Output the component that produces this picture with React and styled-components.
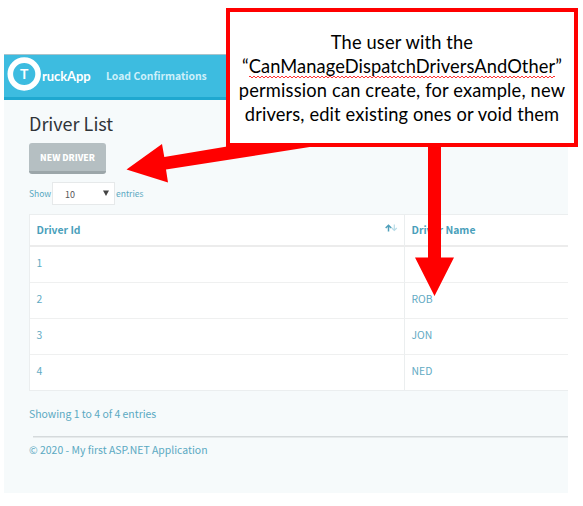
import React from "react";
import styled, { createGlobalStyle } from "styled-components";

const GlobalStyle = createGlobalStyle`
  * { box-sizing: border-box; }
  body { margin: 0; background: #fff; }
`;

const Page = styled.div`
  position: relative;
  width: 583px;
  height: 506px;
  padding: 54px 15px 13px 4px;
  background: #fff;
  overflow: hidden;
  font-family: "Noto Sans CJK SC", "Noto Sans", sans-serif;
  color: #5aa9c2;
`;

const Panel = styled.div`
  height: 439px;
  background: #f6fafb;
`;

const Navbar = styled.nav`
  display: flex;
  align-items: center;
  height: 46px;
  padding: 0 0 1px 3px;
  background: #3dbce0;
  border-top: 1px solid #a9c3cb;
  border-bottom: 3px solid #1fa8d0;
`;

const Logo = styled.svg`
  flex: none;
  width: 35px;
  height: 34px;
  margin-top: -4px;
`;

const LogoLetter = styled.text`
  font: 700 14px Lato, sans-serif;
  fill: #fff;
`;

const Brand = styled.span`
  width: 64px;
  font: 700 13px/20px Lato, sans-serif;
  letter-spacing: -0.1px;
  color: #fff;
`;

const NavLink = styled.span`
  font-size: 10.4px;
  font-weight: 700;
  line-height: 20px;
  color: #cdf0fa;
  white-space: nowrap;
`;

const Content = styled.main`
  padding: 9px 0 0 25px;
`;

const Title = styled.h1`
  margin: 0;
  height: 34px;
  font-size: 18px;
  font-weight: 400;
  line-height: 28px;
  color: #2f3438;
`;

const Button = styled.button`
  display: block;
  width: 77px;
  height: 31px;
  padding: 2px 0 0;
  border: 0;
  border-bottom: 3px solid #9ca6a9;
  border-radius: 3px;
  background: #b5bfc2;
  color: #fff;
  font: 900 8.7px/20px "Noto Sans CJK SC", sans-serif;
`;

const LengthRow = styled.div`
  display: flex;
  align-items: center;
  height: 23px;
  margin-top: 8px;
  font-size: 8.5px;
  line-height: 20px;
`;

const LengthLabel = styled.span`
  min-width: 23px;
  padding-bottom: 2px;
`;

const Select = styled.div`
  display: flex;
  align-items: center;
  justify-content: space-between;
  width: 63px;
  height: 23px;
  margin-right: 1px;
  padding: 2px 5px 0 12px;
  border: 1px solid #e6e9ea;
  background: #fff;
  color: #555;
  font-size: 9px;
`;

const Caret = styled.svg`
  width: 6px;
  height: 6px;
  margin-top: -3px;
`;

const Table = styled.div`
  display: grid;
  grid-template-columns: 374px 1fr;
  margin-top: 9px;
  border: 1px solid #ebeeef;
  border-right: 0;
  background: #fff;
`;

const Cell = styled.div`
  display: flex;
  align-items: center;
  justify-content: space-between;
  height: ${(p) => (p.$head ? 32 : p.$last ? 35 : 36)}px;
  padding: 0 7px ${(p) => (p.$head ? 0 : p.$last ? 4 : 3)}px 6.5px;
  border-left: ${(p) => (p.$divided ? "1px solid #ebeeef" : "0")};
  border-bottom: ${(p) => (p.$head ? "2px solid #ececec" : p.$last ? "0" : "1px solid #eff0f0")};
  font-size: 10.4px;
  font-weight: ${(p) => (p.$head ? 700 : 400)};
  line-height: 20px;
  color: ${(p) => (p.$head ? "#4a9fbb" : "#62aac3")};
`;

const SortIcon = styled.svg`
  width: 13px;
  height: 8px;
  margin: -5px -1px 0 0;
`;

const Info = styled.p`
  margin: 13px 0 0;
  font-size: 10.45px;
  line-height: 20px;
`;

const Footer = styled.footer`
  margin-top: 12px;
  font-size: 10.45px;
  line-height: 20px;
`;

const Rule = styled.hr`
  height: 2px;
  margin: 0 0 2px 4px;
  border: 0;
  border-top: 1px solid #d5dadc;
  background: #e6eaeb;
`;

const Arrows = styled.svg`
  position: absolute;
  left: 0;
  top: 0;
  width: 583px;
  height: 506px;
  pointer-events: none;
`;

const Callout = styled.aside`
  position: absolute;
  left: 226px;
  top: 8px;
  width: 352px;
  height: 139px;
  padding-top: 18px;
  border: 4px solid #f00;
  background: #fff;
  display: flex;
  flex-direction: column;
  align-items: center;
  color: #000;
  font: 400 18.3px/24px Lato, sans-serif;
`;

const CalloutLine = styled.div`
  white-space: nowrap;
  letter-spacing: ${(p) => p.$track}px;
`;

const Misspelled = styled.span`
  padding-bottom: 1px;
  background-image:
    linear-gradient(45deg, transparent 38%, #f33 38%, #f33 62%, transparent 62%),
    linear-gradient(-45deg, transparent 38%, #f33 38%, #f33 62%, transparent 62%);
  background-size: 4px 2px, 4px 2px;
  background-position: 0 100%, 2px 100%;
  background-repeat: repeat-x;
`;

const drivers = [
  ["1", ""],
  ["2", "ROB"],
  ["3", "JON"],
  ["4", "NED"],
];

export default function App() {
  return (
    <Page>
      <GlobalStyle />
      <Panel>
        <Navbar>
          <Logo viewBox="0 0 35 34">
            <circle cx="17.2" cy="17" r="13.9" fill="none" stroke="#fff" strokeWidth="5.6" />
            <LogoLetter x="17.2" y="22" textAnchor="middle">T</LogoLetter>
          </Logo>
          <Brand>ruckApp</Brand>
          <NavLink>Load Confirmations</NavLink>
        </Navbar>
        <Content>
          <Title>Driver List</Title>
          <Button>NEW DRIVER</Button>
          <LengthRow>
            <LengthLabel>Show</LengthLabel>
            <Select>
              10
              <Caret viewBox="0 0 6 6"><path d="M0 0.5H6L3 6Z" fill="#444" /></Caret>
            </Select>
            <LengthLabel>entries</LengthLabel>
          </LengthRow>
          <Table>
            <Cell $head>
              Driver Id
              <SortIcon viewBox="0 0 13 8" fill="none">
                <path d="M3.5 7.5V1.2M0.7 4L3.5 1.2L6.3 4" stroke="#4f9fba" strokeWidth="1.5" />
                <path d="M9.3 0.5V6.5M6.8 4L9.3 6.5L11.8 4" stroke="#b9dce7" strokeWidth="1.2" />
              </SortIcon>
            </Cell>
            <Cell $head $divided>Driver Name</Cell>
            {drivers.map(([id, name], i) => (
              <React.Fragment key={id}>
                <Cell $last={i === 3}>{id}</Cell>
                <Cell $divided $last={i === 3}>{name}</Cell>
              </React.Fragment>
            ))}
          </Table>
          <Info>Showing 1 to 4 of 4 entries</Info>
          <Footer>
            <Rule />
            © 2020 - My first ASP.NET Application
          </Footer>
        </Content>
      </Panel>
      <Arrows viewBox="0 0 583 506" fill="#f00">
        <path d="M126.5 169.5L162 144L164.3 157L230 146L316 146L166 169.5L168 182.5Z" />
        <path d="M428 145H441V257.5H454L434.5 296L415 257.5H428Z" />
      </Arrows>
      <Callout>
        <CalloutLine $track={0.13}>The user with the</CalloutLine>
        <CalloutLine $track={0.08}>“<Misspelled>CanManageDispatchDriversAndOther</Misspelled>”</CalloutLine>
        <CalloutLine $track={0.16}>permission can create, for example, new</CalloutLine>
        <CalloutLine $track={0.13}>drivers, edit existing ones or void them</CalloutLine>
      </Callout>
    </Page>
  );
}
